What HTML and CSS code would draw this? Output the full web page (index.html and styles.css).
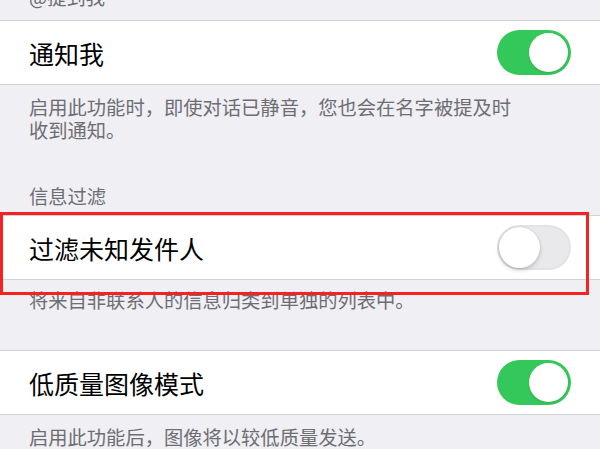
FILE: index.html
```html
<!DOCTYPE html>
<html lang="zh-CN">
<head>
<meta charset="utf-8">
<link rel="stylesheet" href="styles.css">
</head>
<body>
<div class="page">
  <div class="section-header section-header--top"><span>@提到我</span></div>
  <div class="row">
    <span class="row-label">通知我</span>
    <span class="switch switch--on"><span class="knob"></span></span>
  </div>
  <div class="footer footer--first">启用此功能时，即使对话已静音，您也会在名字被提及时<br>收到通知。</div>

  <div class="section-header section-header--mid"><span>信息过滤</span></div>
  <div class="row-wrap">
    <div class="row">
      <span class="row-label">过滤未知发件人</span>
      <span class="switch switch--off"><span class="knob"></span></span>
    </div>
    <div class="highlight"></div>
  </div>
  <div class="footer footer--second">将来自非联系人的信息归类到单独的列表中。</div>

  <div class="row row--spaced">
    <span class="row-label">低质量图像模式</span>
    <span class="switch switch--on"><span class="knob"></span></span>
  </div>
  <div class="footer footer--third">启用此功能后，图像将以较低质量发送。</div>
</div>
</body>
</html>
```

FILE: styles.css
```css
html, body {
  margin: 0;
  padding: 0;
}

body {
  background: #efeff4;
  font-family: "Noto Sans CJK SC", "Noto Sans", sans-serif;
  width: 600px;
  height: 449px;
  overflow: hidden;
}

.page {
  display: flex;
  flex-direction: column;
}

.section-header {
  display: flex;
  align-items: flex-end;
  padding-left: 29px;
  font-size: 19.3px;
  line-height: 22px;
  color: #6d6d72;
}

.section-header--top {
  height: 8px;
  padding-bottom: 12px;
}

.section-header--mid {
  padding-top: 43px;
  padding-bottom: 8px;
}

.row {
  display: flex;
  align-items: center;
  justify-content: space-between;
  height: 63px;
  background: #ffffff;
  border-top: 1px solid #d1d1d6;
  border-bottom: 1px solid #d1d1d6;
  padding-left: 29px;
  padding-right: 29px;
}

.row--spaced {
  margin-top: 38px;
}

.row-label {
  font-size: 25px;
  line-height: 30px;
  color: #000000;
}

.row-wrap {
  position: relative;
}

.highlight {
  position: absolute;
  left: 0;
  top: -3px;
  width: 583px;
  height: 77px;
  border: 3px solid #f42222;
  pointer-events: none;
}

.footer {
  padding-left: 29px;
  font-size: 19.3px;
  line-height: 23px;
  color: #6d6d72;
}

.footer--first {
  padding-top: 11px;
}

.footer--second {
  padding-top: 9px;
}

.footer--third {
  padding-top: 11px;
}

.switch {
  position: relative;
  box-sizing: border-box;
  width: 74px;
  height: 45px;
  border-radius: 23px;
  flex: none;
}

.switch--on {
  background: #34c759;
}

.switch--off {
  background: #e9e9eb;
  border: 2px solid #e3e3e6;
}

.knob {
  position: absolute;
  top: 3px;
  width: 39px;
  height: 39px;
  border-radius: 50%;
  background: #ffffff;
}

.switch--on .knob {
  right: 3px;
  box-shadow: 0 1px 2px rgba(0, 0, 0, 0.12);
}

.switch--off .knob {
  left: 0;
  top: 0;
  width: 41px;
  height: 41px;
  box-shadow: 0 2px 4px rgba(0, 0, 0, 0.2), 0 0 0 0.5px rgba(0, 0, 0, 0.08);
}
```
